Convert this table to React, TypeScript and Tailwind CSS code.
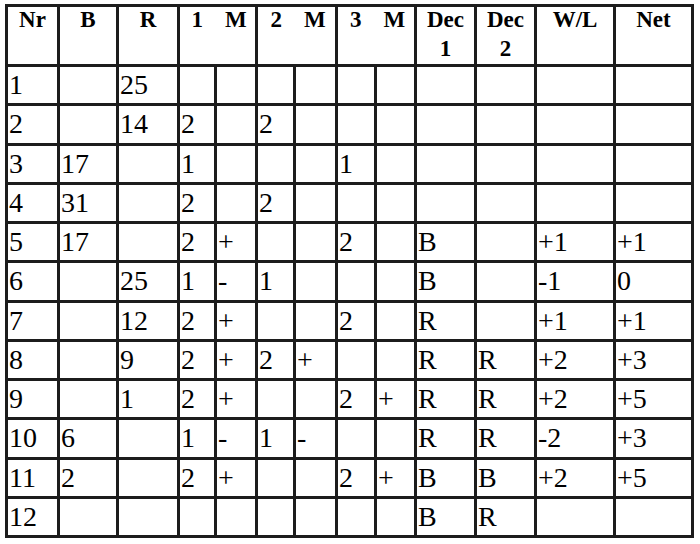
import React from "react";

const rows: string[][] = [
  ["1", "", "25", "", "", "", "", "", "", "", "", "", ""],
  ["2", "", "14", "2", "", "2", "", "", "", "", "", "", ""],
  ["3", "17", "", "1", "", "", "", "1", "", "", "", "", ""],
  ["4", "31", "", "2", "", "2", "", "", "", "", "", "", ""],
  ["5", "17", "", "2", "+", "", "", "2", "", "B", "", "+1", "+1"],
  ["6", "", "25", "1", "-", "1", "", "", "", "B", "", "-1", "0"],
  ["7", "", "12", "2", "+", "", "", "2", "", "R", "", "+1", "+1"],
  ["8", "", "9", "2", "+", "2", "+", "", "", "R", "R", "+2", "+3"],
  ["9", "", "1", "2", "+", "", "", "2", "+", "R", "R", "+2", "+5"],
  ["10", "6", "", "1", "-", "1", "-", "", "", "R", "R", "-2", "+3"],
  ["11", "2", "", "2", "+", "", "", "2", "+", "B", "B", "+2", "+5"],
  ["12", "", "", "", "", "", "", "", "", "B", "R", "", ""],
];

const head =
  "bg-white text-center font-bold text-[23px] leading-[29px] text-black font-['Liberation_Serif']";

function Head({
  children,
  span = false,
}: {
  children: React.ReactNode;
  span?: boolean;
}) {
  return (
    <div className={span ? `${head} col-span-2` : head}>
      <div className="-mt-[2px]">{children}</div>
    </div>
  );
}

function PairHead({ n }: { n: string }) {
  return (
    <div className="flex justify-center gap-[22px] pl-[3px]">
      <span>{n}</span>
      <span>M</span>
    </div>
  );
}

export default function App() {
  return (
    <div className="w-[700px] h-[544px] bg-white overflow-hidden pl-[5px] pt-[4px] font-['Liberation_Serif']">
      <div className="inline-grid grid-cols-[49px_56px_58px_34px_38px_35px_39px_36px_37px_57px_57px_76px_75px] grid-rows-[57px_repeat(12,36.25px)] gap-[3px] p-[3px] bg-[#1c1c1c] font-['Liberation_Serif']">
        <Head>Nr</Head>
        <Head>B</Head>
        <Head>R</Head>
        <Head span>
          <PairHead n="1" />
        </Head>
        <Head span>
          <PairHead n="2" />
        </Head>
        <Head span>
          <PairHead n="3" />
        </Head>
        <Head>
          Dec
          <br />1
        </Head>
        <Head>
          Dec
          <br />2
        </Head>
        <Head>W/L</Head>
        <Head>Net</Head>
        {rows.map((r, i) =>
          r.map((c, j) => (
            <div
              key={`${i}-${j}`}
              className="bg-white flex items-center pl-[1px] text-[28px] leading-[30px] text-black whitespace-nowrap font-['Liberation_Serif']"
            >
              {c}
            </div>
          ))
        )}
      </div>
    </div>
  );
}
